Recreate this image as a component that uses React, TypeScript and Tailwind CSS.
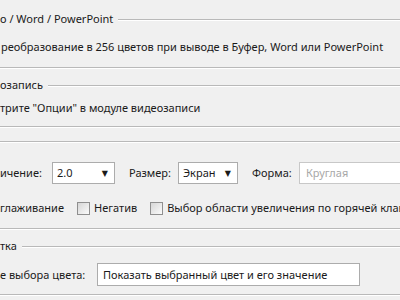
import {ReactNode} from "react";

function Legend({title, children}: {title?: string, children?: ReactNode}) {
    return (
        <div className="flex items-center h-[14px]">
            {title && <span className="pr-[5px] whitespace-nowrap shrink-0">{title}</span>}
            <div className="flex-1 border-t border-[#b9b9b9] shadow-[0_1px_0_#ffffff]"/>
            {children}
        </div>
    )
}

function Rule() {
    return <div className="border-t border-[#b9b9b9] shadow-[0_1px_0_#ffffff]"/>
}

function Combo({value, className}: {value: string, className: string}) {
    return (
        <div className={"shrink-0 h-[22px] bg-white border border-[#acacac] flex items-center justify-between pl-[4px] pr-[6px] " + className}>
            <span className="whitespace-nowrap overflow-hidden">{value}</span>
            <span className="text-[8px] leading-none">▼</span>
        </div>
    )
}

function Check({label}: {label: string}) {
    return (
        <div className="flex items-center gap-[4px] shrink-0">
            <div className="w-[13px] h-[13px] shrink-0 border border-[#8f8f8f] bg-gradient-to-br from-[#d6d6d6] to-[#fbfbfb]"/>
            <span className="whitespace-nowrap">{label}</span>
        </div>
    )
}

export default function App() {
    return (
        <div className="w-[400px] h-[300px] overflow-hidden bg-[#f0f0f0] text-[#1a1a1a] text-[11px] leading-[14px]"
             style={{fontFamily: '"Noto Sans", "DejaVu Sans", sans-serif'}}>
            <div className="pt-[12px]">
                <Legend title="о / Word / PowerPoint"/>
                <div className="mt-[14px] pl-[1px] whitespace-nowrap">реобразование в 256 цветов при выводе в Буфер, Word или PowerPoint</div>
                <div className="mt-[13px]"><Rule/></div>

                <div className="mt-[10px]"><Legend title="озапись"/></div>
                <div className="mt-[9px] whitespace-nowrap">трите "Опции" в модуле видеозаписи</div>
                <div className="mt-[11px]"><Rule/></div>

                <div className="mt-[14px]"><Rule/></div>
                <div className="mt-[20px] flex items-center">
                    <span className="shrink-0 w-[52px] whitespace-nowrap">ичение:</span>
                    <Combo value="2.0" className="w-[63px]"/>
                    <span className="shrink-0 ml-[14px] w-[49px] whitespace-nowrap">Размер:</span>
                    <Combo value="Экран" className="w-[60px]"/>
                    <span className="shrink-0 ml-[14px] w-[47px] whitespace-nowrap">Форма:</span>
                    <div className="flex-1 h-[22px] bg-white border border-[#c8c8c8] border-r-0 flex items-center pl-[6px] text-[#a8a8a8]">Круглая</div>
                </div>
                <div className="mt-[17px] flex items-center whitespace-nowrap overflow-hidden">
                    <span className="shrink-0 w-[77px]">глаживание</span>
                    <Check label="Негатив"/>
                    <div className="ml-[13px] shrink-0"><Check label="Выбор области увеличения по горячей клавише"/></div>
                </div>
                <div className="mt-[13px]"><Rule/></div>

                <div className="mt-[10px]"><Legend title="тка"/></div>
                <div className="mt-[10px] flex items-center">
                    <span className="shrink-0 w-[97px] whitespace-nowrap">е выбора цвета:</span>
                    <div className="shrink-0 w-[263px] h-[23px] bg-white border border-[#acacac] flex items-center pl-[5px] whitespace-nowrap overflow-hidden">Показать выбранный цвет и его значение</div>
                </div>
                <div className="mt-[8px]"><Rule/></div>
            </div>
        </div>
    )
}
